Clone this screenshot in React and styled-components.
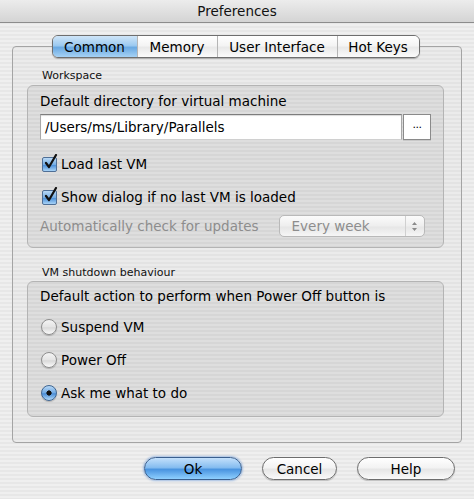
import React from "react";
import styled, { createGlobalStyle } from "styled-components";

const Global = createGlobalStyle`
  html, body { margin: 0; padding: 0; }
  body { font-family: "DejaVu Sans", "Liberation Sans", sans-serif; }
`;

const stripes = `repeating-linear-gradient(to bottom, #efefef 0px, #efefef 2px, #e7e7e7 2px, #e7e7e7 4px)`;

const Window = styled.div`
  width: 474px;
  height: 499px;
  display: flex;
  flex-direction: column;
  background: ${stripes};
  overflow: hidden;
`;

const TitleBar = styled.div`
  height: 23px;
  flex: none;
  display: flex;
  align-items: center;
  justify-content: center;
  background: linear-gradient(to bottom, #ececec, #d4d4d4);
  border-bottom: 1px solid #8c8c8c;
  font-size: 13.5px;
  color: #111;
  box-sizing: border-box;
`;

const Body = styled.div`
  display: flex;
  flex-direction: column;
  padding: 12px 12px 0 12px;
`;

const TabRow = styled.div`
  display: flex;
  justify-content: center;
  position: relative;
  z-index: 1;
  padding-right: 3px;
`;

const Tabs = styled.div`
  display: flex;
  height: 21px;
  border: 1px solid #6e6e6e;
  border-radius: 6px;
  overflow: hidden;
  box-shadow: 0 1px 1px rgba(0, 0, 0, 0.25);
`;

const Tab = styled.div`
  width: ${(p) => p.w}px;
  display: flex;
  align-items: center;
  justify-content: center;
  font-size: 13.5px;
  color: #000;
  border-left: ${(p) => (p.first ? "none" : "1px solid #b5b5b5")};
  background: ${(p) =>
    p.active
      ? "linear-gradient(to bottom, #cfe5f8 0%, #9ccaf0 45%, #6aa9e2 55%, #a6d2f5 100%)"
      : "linear-gradient(to bottom, #ffffff 0%, #f4f4f4 45%, #e9e9e9 55%, #fbfbfb 100%)"};
`;

const Pane = styled.div`
  margin-top: -12px;
  height: 397px;
  box-sizing: border-box;
  border: 1px solid #a4a4a4;
  border-radius: 4px;
  background: rgba(0, 0, 0, 0.015);
  padding: 22px 17px 0 14px;
  display: flex;
  flex-direction: column;
`;

const GroupLabel = styled.div`
  font-size: 11px;
  color: #111;
  margin-left: 15px;
  margin-top: ${(p) => p.mt || 0}px;
  height: 14px;
  line-height: 14px;
`;

const Group = styled.div`
  margin-top: ${(p) => p.mt}px;
  height: ${(p) => p.h}px;
  box-sizing: border-box;
  border: 1px solid #b4b4b4;
  border-radius: 6px;
  background: rgba(0, 0, 0, 0.055);
  padding: ${(p) => p.pt}px 12px 0 12px;
  display: flex;
  flex-direction: column;
`;

const Text = styled.div`
  font-size: 13.5px;
  line-height: 16px;
  white-space: nowrap;
  color: ${(p) => (p.disabled ? "#8d8d8d" : "#000")};
`;

const FieldRow = styled.div`
  display: flex;
  margin-top: 5px;
  height: 26px;
`;

const Field = styled.div`
  width: 362px;
  box-sizing: border-box;
  background: #fff;
  border-top: 1px solid #7d7d7d;
  border-left: 1px solid #a8a8a8;
  border-right: 1px solid #a8a8a8;
  border-bottom: 1px solid #d0d0d0;
  box-shadow: inset 0 1px 1px rgba(0, 0, 0, 0.15);
  font-size: 13.5px;
  display: flex;
  align-items: center;
  padding-left: 4px;
`;

const DotsButton = styled.div`
  width: 28px;
  margin-left: 1px;
  box-sizing: border-box;
  background: #fff;
  border: 1px solid #8a8a8a;
  box-shadow: 0 1px 0 #c8c8c8;
  font-size: 11px;
  display: flex;
  align-items: center;
  justify-content: center;
  padding-bottom: 5px;
  letter-spacing: -0.5px;
`;

const CheckRow = styled.div`
  display: flex;
  align-items: center;
  gap: 4px;
  margin-top: ${(p) => p.mt}px;
  margin-left: 2px;
  height: 18px;
`;

const Box = styled.div`
  width: 15px;
  height: 15px;
  box-sizing: border-box;
  border: 1px solid #4f6f96;
  border-radius: 2px;
  background: linear-gradient(to bottom, #b9d9f6 0%, #76aee4 50%, #4b8fd8 55%, #a8d3f7 100%);
  position: relative;
  flex: none;
`;

const CheckMark = styled.svg`
  position: absolute;
  left: 1px;
  top: -4px;
`;

const UpdateRow = styled.div`
  display: flex;
  align-items: center;
  margin-top: 9px;
  height: 22px;
`;

const Popup = styled.div`
  margin-left: 20px;
  width: 146px;
  height: 22px;
  box-sizing: border-box;
  border: 1px solid #b9b9b9;
  border-radius: 5px;
  background: linear-gradient(to bottom, #fbfbfb, #eeeeee 50%, #e6e6e6 55%, #f6f6f6);
  display: flex;
  align-items: center;
  font-size: 13.5px;
  color: #8d8d8d;
`;

const PopupText = styled.div`
  flex: 1;
  padding-left: 12px;
`;

const PopupArrows = styled.div`
  width: 18px;
  height: 100%;
  border-left: 1px solid #d0d0d0;
  display: flex;
  align-items: center;
  justify-content: center;
`;

const RadioRow = styled.div`
  display: flex;
  align-items: center;
  gap: 4px;
  margin-top: ${(p) => p.mt}px;
  height: 18px;
  margin-left: 1px;
`;

const Radio = styled.div`
  width: 16px;
  height: 16px;
  box-sizing: border-box;
  border-radius: 50%;
  flex: none;
  border: 1px solid ${(p) => (p.on ? "#3f6591" : "#8e8e8e")};
  background: ${(p) =>
    p.on
      ? "radial-gradient(circle at 50% 50%, #111 0, #111 2.3px, transparent 2.9px), linear-gradient(to bottom, #b7d8f6 0%, #6fa8e2 50%, #4a8dd6 55%, #b2d9f8 100%)"
      : "linear-gradient(to bottom, #f4f4f4 0%, #e4e4e4 50%, #d9d9d9 55%, #fbfbfb 100%)"};
  box-shadow: 0 1px 1px rgba(0, 0, 0, 0.2);
`;

const ButtonRow = styled.div`
  display: flex;
  justify-content: flex-end;
  gap: 20px;
  padding-right: 7px;
  margin-top: 14px;
`;

const Button = styled.div`
  width: ${(p) => p.w}px;
  height: 23px;
  box-sizing: border-box;
  border-radius: 12px;
  border: 1px solid ${(p) => (p.primary ? "#3a5f8e" : "#6d6d6d")};
  background: ${(p) =>
    p.primary
      ? "linear-gradient(to bottom, #c4e0fb 0%, #86bdf0 45%, #4a94e0 55%, #8fd0ff 100%)"
      : "linear-gradient(to bottom, #ffffff 0%, #f3f3f3 45%, #e6e6e6 55%, #fafafa 100%)"};
  box-shadow: ${(p) => (p.primary ? "0 0 2px 1px rgba(70,130,210,0.45)" : "0 1px 1px rgba(0,0,0,0.2)")};
  display: flex;
  align-items: center;
  justify-content: center;
  font-size: 13.5px;
  color: #000;
`;

const Check = () => (
  <Box>
    <CheckMark width="14" height="16" viewBox="0 0 14 16">
      <path d="M2 9 L5 13 L12 1" fill="none" stroke="#111" strokeWidth="2.2" strokeLinecap="round" strokeLinejoin="round" />
    </CheckMark>
  </Box>
);

export default function App() {
  return (
    <Window>
      <Global />
      <TitleBar>Preferences</TitleBar>
      <Body>
        <TabRow>
          <Tabs>
            <Tab w={84} first active>Common</Tab>
            <Tab w={79}>Memory</Tab>
            <Tab w={119}>User Interface</Tab>
            <Tab w={81}>Hot Keys</Tab>
          </Tabs>
        </TabRow>
        <Pane>
          <GroupLabel>Workspace</GroupLabel>
          <Group mt={2} h={163} pt={7}>
            <Text>Default directory for virtual machine</Text>
            <FieldRow>
              <Field>/Users/ms/Library/Parallels</Field>
              <DotsButton>...</DotsButton>
            </FieldRow>
            <CheckRow mt={15}>
              <Check />
              <Text>Load last VM</Text>
            </CheckRow>
            <CheckRow mt={15}>
              <Check />
              <Text>Show dialog if no last VM is loaded</Text>
            </CheckRow>
            <UpdateRow>
              <Text disabled>Automatically check for updates</Text>
              <Popup>
                <PopupText>Every week</PopupText>
                <PopupArrows>
                  <svg width="7" height="11" viewBox="0 0 7 11">
                    <path d="M3.5 1 L6 4 L1 4 Z M3.5 10 L6 7 L1 7 Z" fill="#8a8a8a" />
                  </svg>
                </PopupArrows>
              </Popup>
            </UpdateRow>
          </Group>
          <GroupLabel mt={18}>VM shutdown behaviour</GroupLabel>
          <Group mt={1} h={136} pt={6}>
            <Text>Default action to perform when Power Off button is</Text>
            <RadioRow mt={14}>
              <Radio />
              <Text>Suspend VM</Text>
            </RadioRow>
            <RadioRow mt={15}>
              <Radio />
              <Text>Power Off</Text>
            </RadioRow>
            <RadioRow mt={15}>
              <Radio on />
              <Text>Ask me what to do</Text>
            </RadioRow>
          </Group>
        </Pane>
        <ButtonRow>
          <Button w={98} primary>Ok</Button>
          <Button w={75}>Cancel</Button>
          <Button w={98}>Help</Button>
        </ButtonRow>
      </Body>
    </Window>
  );
}
